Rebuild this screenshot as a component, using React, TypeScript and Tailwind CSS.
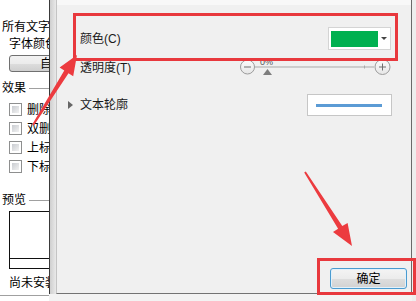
import React from 'react';

const effects = ['删除线', '双删除线', '上标', '下标'];

function Checkbox({ label }: { label: string }) {
  return (
    <div className="h-[19px] flex items-center pl-[9px] gap-[5px]">
      <div className="w-[13px] h-[13px] shrink-0 border border-[#8e8f8f] bg-white p-[2px]">
        <div className="w-full h-full bg-[linear-gradient(135deg,#c9ccd1_0%,#f2f2f2_100%)]" />
      </div>
      <span>{label}</span>
    </div>
  );
}

function LeftPane() {
  return (
    <div className="w-[49px] shrink-0 overflow-hidden bg-white whitespace-nowrap text-black">
      <div className="mt-[20px] h-[14px] flex items-center pl-[2px]">所有文字</div>
      <div className="mt-[3px] h-[14px] flex items-center pl-[9px]">字体颜色</div>
      <div className="mt-[4px] ml-[9px] w-[86px] h-[17px] shrink-0 rounded-[3px] border border-[#707070] bg-[linear-gradient(to_bottom,#f2f2f2_0%,#ebebeb_50%,#dddddd_51%,#cfcfcf_100%)] flex items-center justify-center">
        自动
      </div>
      <div className="mt-[9px] h-[14px] flex items-center pl-[2px] gap-[3px]">
        <span>效果</span>
        <div className="w-[40px] h-px bg-[#a0a0a0]" />
      </div>
      <div className="mt-[5px]">
        {effects.map((e) => (
          <Checkbox key={e} label={e} />
        ))}
      </div>
      <div className="mt-[17px] h-[14px] flex items-center pl-[2px] gap-[3px]">
        <span>预览</span>
        <div className="w-[40px] h-px bg-[#a0a0a0]" />
      </div>
      <div className="mt-[4px] ml-[9px] w-[100px] h-[58px] border border-[#111] flex flex-col">
        <div className="flex-1" />
        <div className="h-[10px] border-t border-[#111]" />
      </div>
      <div className="mt-[7px] h-[14px] flex items-center pl-[9px]">尚未安装此字体</div>
      <div className="mt-[5px] h-px bg-[#a0a0a0]" />
    </div>
  );
}

function Slider() {
  return (
    <svg width="151" height="20" viewBox="0 0 151 20">
      <defs>
        <linearGradient id="knob" x1="0" y1="0" x2="0" y2="1">
          <stop offset="0" stopColor="#fbfbfb" />
          <stop offset="1" stopColor="#e6e6e6" />
        </linearGradient>
      </defs>
      <line x1="15" y1="9" x2="134" y2="9" stroke="#a9a9a9" strokeWidth="1" />
      <line x1="124.5" y1="7.5" x2="124.5" y2="10.5" stroke="#a9a9a9" strokeWidth="1" />
      <circle cx="7.5" cy="9" r="7" fill="url(#knob)" stroke="#9c9c9c" strokeWidth="1" />
      <line x1="4" y1="9" x2="11" y2="9" stroke="#6f6f6f" strokeWidth="1" />
      <circle cx="142.5" cy="9" r="7.5" fill="url(#knob)" stroke="#9c9c9c" strokeWidth="1" />
      <line x1="139" y1="9" x2="146" y2="9" stroke="#6f6f6f" strokeWidth="1" />
      <line x1="142.5" y1="5.5" x2="142.5" y2="12.5" stroke="#6f6f6f" strokeWidth="1" />
      <text x="20" y="7" fontSize="9" fill="#555" fontFamily="Liberation Sans, sans-serif">0%</text>
      <polygon points="27.5,11 23,17 32,17" fill="#7d7d7d" />
    </svg>
  );
}

function Dialog() {
  return (
    <div className="w-[363px] shrink-0 flex flex-col bg-[#f3f3f3]">
      <div className="h-[294px] flex">
        <div className="w-[7px] shrink-0 border-l border-[#3a3a3a] bg-[linear-gradient(to_right,#cfcfcf,#e9e9e9)]" />
        <div className="flex-1 border-l border-r border-b border-l-[#c4c4c4] border-r-[#6a6a6a] border-b-[#737373] bg-[#f0f0f0] flex flex-col text-[#1a1a1a]">
          <div className="h-[5px] bg-[#f8f8f8]" />
          <div className="mt-[22px] h-[23px] flex items-center justify-between pl-[23px] pr-[20px]">
            <span>颜色(C)</span>
            <div className="w-[63px] h-[23px] border border-[#d4d4d4] bg-white flex items-center pl-[2px]">
              <div className="w-[47px] h-[16px] bg-[#00b050]" />
              <div className="flex-1 flex justify-center">
                <div className="w-0 h-0 border-l-[3px] border-r-[3px] border-t-[3px] border-l-transparent border-r-transparent border-t-[#444]" />
              </div>
            </div>
          </div>
          <div className="mt-[8px] h-[20px] flex items-center justify-between pl-[23px] pr-[20px]">
            <span>透明度(T)</span>
            <Slider />
          </div>
          <div className="mt-[16px] h-[22px] flex items-center justify-between pl-[11px] pr-[19px]">
            <div className="flex items-center gap-[7px]">
              <div className="w-0 h-0 border-t-[4px] border-b-[4px] border-l-[5px] border-t-transparent border-b-transparent border-l-[#666]" />
              <span>文本轮廓</span>
            </div>
            <div className="w-[85px] h-[22px] border border-[#c6c6c6] bg-white flex items-center pl-[8px]">
              <div className="w-[66px] h-[3px] bg-[#5b9bd5]" />
            </div>
          </div>
          <div className="mt-auto self-end mr-[4px] mb-[4px] w-[77px] h-[21px] rounded-[3px] border border-[#4a9bd0] bg-[linear-gradient(to_bottom,#f4f4f4_0%,#ececec_50%,#dedede_51%,#d2d2d2_100%)] shadow-[inset_0_0_0_1px_#e2f1fb] flex items-center justify-center text-black">
            确定
          </div>
        </div>
      </div>
    </div>
  );
}

function Arrows() {
  return (
    <svg className="absolute inset-0 pointer-events-none" width="416" height="301" viewBox="0 0 416 301">
      <polygon
        points="32.2,124.5 64.3,70.6 59.6,67.6 77,55 73.2,76.2 68.5,73.2 33.9,125.5"
        fill="#ec3b3f"
      />
      <polygon
        points="305.8,171.5 342.3,226.1 347.6,223 352,246 333,232 338.1,228.7 304.2,172.5"
        fill="#ec3b3f"
      />
    </svg>
  );
}

export default function App() {
  return (
    <div className="relative w-[416px] h-[301px] overflow-hidden flex bg-white text-[12px] leading-none font-['Liberation_Sans','Noto_Sans_CJK_SC',sans-serif]">
      <LeftPane />
      <Dialog />
      <div className="flex-1 bg-[#eeeeee]" />
      <div className="absolute left-[73px] top-[13px] w-[325px] h-[48px] border-[3px] border-[#e8383d]" />
      <div className="absolute left-[317px] top-[258px] w-[99px] h-[37px] border-[3px] border-[#e8383d]" />
      <Arrows />
    </div>
  );
}
